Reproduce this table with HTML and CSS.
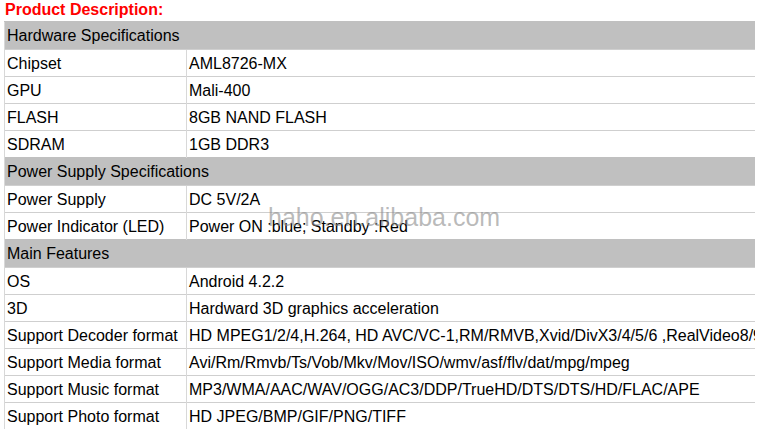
FILE: index.html
```html
<!DOCTYPE html>
<html>
<head>
<meta charset="utf-8">
<link rel="stylesheet" href="styles.css">
</head>
<body>
<div class="page">
  <h1 class="title">Product Description:</h1>
  <table class="spec">
    <colgroup><col class="c1"><col class="c2"></colgroup>
    <tr class="head"><td colspan="2">Hardware Specifications</td></tr>
    <tr><td>Chipset</td><td>AML8726-MX</td></tr>
    <tr><td>GPU</td><td>Mali-400</td></tr>
    <tr><td>FLASH</td><td>8GB NAND FLASH</td></tr>
    <tr><td>SDRAM</td><td>1GB DDR3</td></tr>
    <tr class="head"><td colspan="2">Power Supply Specifications</td></tr>
    <tr><td>Power Supply</td><td>DC 5V/2A</td></tr>
    <tr><td>Power Indicator (LED)</td><td>Power ON :blue; Standby :Red</td></tr>
    <tr class="head"><td colspan="2">Main Features</td></tr>
    <tr><td>OS</td><td>Android 4.2.2</td></tr>
    <tr><td>3D</td><td>Hardward 3D graphics acceleration</td></tr>
    <tr><td>Support Decoder format</td><td>HD MPEG1/2/4,H.264, HD AVC/VC-1,RM/RMVB,Xvid/DivX3/4/5/6 ,RealVideo8/9/10</td></tr>
    <tr><td>Support Media format</td><td>Avi/Rm/Rmvb/Ts/Vob/Mkv/Mov/ISO/wmv/asf/flv/dat/mpg/mpeg</td></tr>
    <tr><td>Support Music format</td><td>MP3/WMA/AAC/WAV/OGG/AC3/DDP/TrueHD/DTS/DTS/HD/FLAC/APE</td></tr>
    <tr><td>Support Photo format</td><td>HD JPEG/BMP/GIF/PNG/TIFF</td></tr>
  </table>
  <div class="watermark">haho.en.alibaba.com</div>
</div>
</body>
</html>
```
FILE: styles.css
```css
html, body {
  margin: 0;
  padding: 0;
  background: #ffffff;
}
.page {
  position: relative;
  width: 765px;
  height: 432px;
  overflow: hidden;
  font-family: "Liberation Sans", Arial, sans-serif;
}
.title {
  margin: 0;
  padding: 2px 0 0 5px;
  height: 19px;
  font-size: 16px;
  line-height: 16px;
  font-weight: bold;
  color: #ff0000;
}
.spec {
  margin-left: 4px;
  width: 751px;
  border-collapse: collapse;
  table-layout: fixed;
  font-size: 16px;
  color: #000000;
}
.c1 { width: 182px; }
.spec td {
  height: 25px;
  padding: 1px 0 0 2px;
  border-top: 1px solid #cfcfcf;
  border-left: 1px solid #d8d8d8;
  white-space: nowrap;
  overflow: hidden;
  line-height: 25px;
  vertical-align: middle;
}
.spec tr.head td {
  background: #c0c0c0;
  height: 26px;
  line-height: 26px;
  border-left: 1px solid #d8d8d8;
  border-top: 1px solid #c0c0c0;
}
.watermark {
  position: absolute;
  left: 268px;
  top: 203px;
  font-size: 25px;
  color: rgba(140, 140, 140, 0.6);
  white-space: nowrap;
}
```
